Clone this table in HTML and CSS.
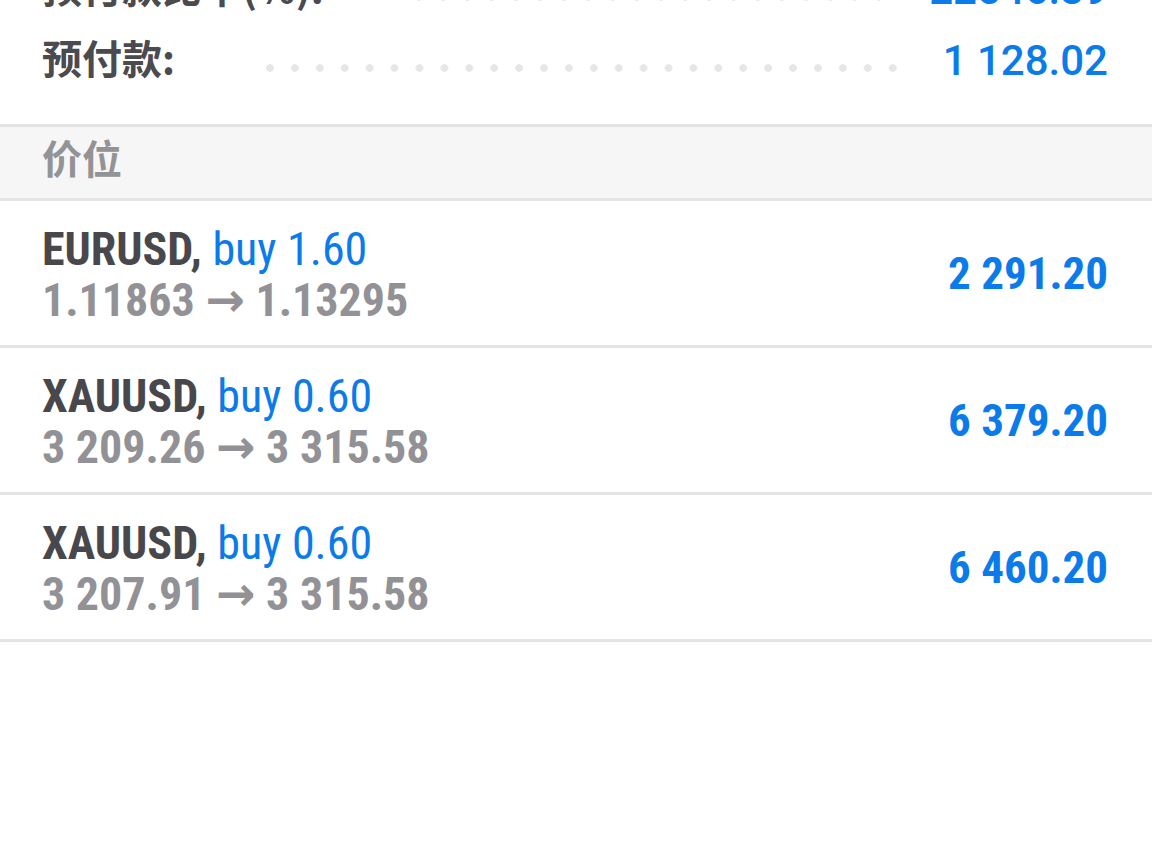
FILE: index.html
```html
<!DOCTYPE html>
<html lang="zh">
<head>
<meta charset="utf-8">
<link rel="stylesheet" href="styles.css">
</head>
<body>
<div class="page">
  <section class="summary">
    <div class="sum-row">
      <span class="sum-label">预付款比率(%):</span>
      <span class="leader"></span>
      <span class="sum-value">22546.39</span>
    </div>
    <div class="sum-row">
      <span class="sum-label">预付款:</span>
      <span class="leader"></span>
      <span class="sum-value">1 128.02</span>
    </div>
  </section>
  <div class="section-head">价位</div>
  <ul class="orders">
    <li class="order">
      <div class="order-info">
        <div class="order-title"><span class="sym">EURUSD,</span> <span class="side">buy 1.60</span></div>
        <div class="order-prices">1.11863 <span class="arrow">→</span> 1.13295</div>
      </div>
      <div class="order-amount">2 291.20</div>
    </li>
    <li class="order">
      <div class="order-info">
        <div class="order-title"><span class="sym">XAUUSD,</span> <span class="side">buy 0.60</span></div>
        <div class="order-prices">3 209.26 <span class="arrow">→</span> 3 315.58</div>
      </div>
      <div class="order-amount">6 379.20</div>
    </li>
    <li class="order">
      <div class="order-info">
        <div class="order-title"><span class="sym">XAUUSD,</span> <span class="side">buy 0.60</span></div>
        <div class="order-prices">3 207.91 <span class="arrow">→</span> 3 315.58</div>
      </div>
      <div class="order-amount">6 460.20</div>
    </li>
  </ul>
</div>
</body>
</html>
```

FILE: styles.css
```css
html, body {
  margin: 0;
  padding: 0;
  background: #ffffff;
}
body {
  width: 1152px;
  height: 846px;
  overflow: hidden;
  font-family: "Roboto", "Noto Sans CJK SC", sans-serif;
}
.page {
  display: flex;
  flex-direction: column;
}
.summary {
  margin-top: -46px;
  padding-bottom: 28px;
}
.sum-row {
  height: 71px;
  display: flex;
  align-items: center;
  padding: 0 44px 0 42px;
}
.sum-label {
  font-family: "Noto Sans CJK SC", sans-serif;
  font-weight: 700;
  font-size: 40px;
  color: #4a4a4f;
  white-space: nowrap;
  margin-bottom: 8px;
}
.leader {
  flex: 1;
  height: 8px;
  margin: 14px 38px 0 83px;
  background-image: radial-gradient(circle at 12px 4px, #e6e6e6 3.5px, transparent 4px);
  background-size: 24px 8px;
  background-repeat: space no-repeat;
}
.sum-value {
  font-family: "Roboto", sans-serif;
  font-weight: 500;
  font-size: 42px;
  color: #0a7be8;
  white-space: nowrap;
}
.section-head {
  box-sizing: border-box;
  height: 77px;
  border-top: 3px solid #e4e4e4;
  border-bottom: 3px solid #e4e4e4;
  background: #f6f6f6;
  display: flex;
  align-items: center;
  padding: 0 0 12px 42px;
  font-family: "Noto Sans CJK SC", sans-serif;
  font-weight: 700;
  font-size: 40px;
  color: #939396;
}
.orders {
  list-style: none;
  margin: 0;
  padding: 0;
}
.order {
  height: 144px;
  border-bottom: 3px solid #e4e4e4;
  display: flex;
  align-items: center;
  justify-content: space-between;
  padding: 0 44px 0 42px;
  font-family: "Roboto", sans-serif;
  font-stretch: 75%;
}
.order-info {
  display: flex;
  flex-direction: column;
  margin-top: 4px;
}
.order-title, .order-prices {
  font-size: 46px;
  line-height: 51px;
  white-space: nowrap;
}
.sym {
  font-weight: 700;
  color: #48484c;
}
.side {
  font-weight: 400;
  color: #0a7be8;
}
.order-prices {
  font-weight: 700;
  color: #929296;
}
.arrow {
  font-family: "DejaVu Sans", sans-serif;
  font-stretch: normal;
  font-weight: 700;
  font-size: 47px;
  line-height: 0;
}
.order-amount {
  font-size: 45px;
  font-weight: 700;
  color: #0a7be8;
  white-space: nowrap;
}
```
